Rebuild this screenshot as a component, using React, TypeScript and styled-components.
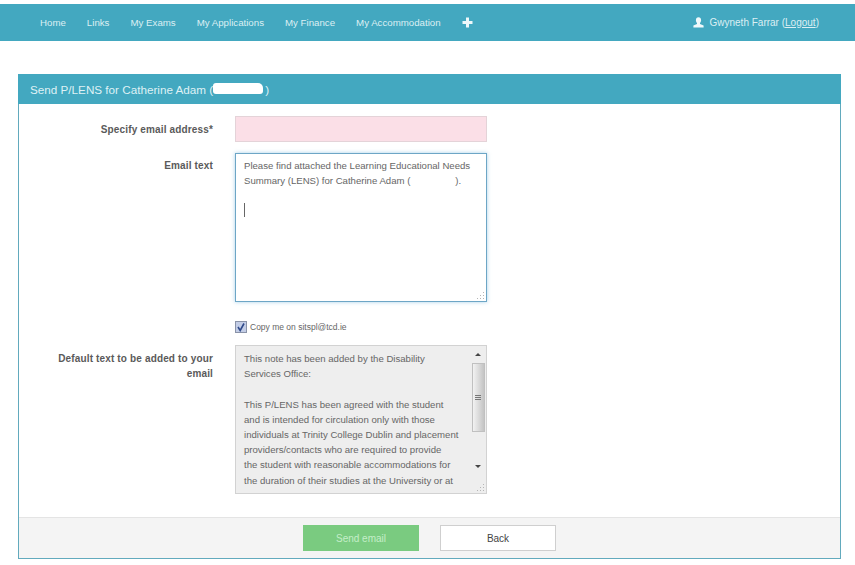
import React from "react";
import styled, { createGlobalStyle } from "styled-components";

const GlobalStyle = createGlobalStyle`
  html, body {
    margin: 0;
    padding: 0;
    background: #fff;
    font-family: "Liberation Sans", Arial, sans-serif;
  }
  * { box-sizing: border-box; }
`;

const Page = styled.div`
  width: 855px;
  height: 565px;
  overflow: hidden;
  padding-top: 4px;
  background: #fff;
`;

const NavBar = styled.nav`
  height: 37px;
  display: flex;
  align-items: center;
  justify-content: space-between;
  padding: 0 36px 0 40px;
  background: #43a8c0;
  color: #dceff3;
  font-size: 10px;
`;

const NavLinks = styled.div`
  display: flex;
  align-items: center;
  gap: 21px;
  font-size: 9.7px;
`;

const NavLink = styled.a`
  color: #dceff3;
  white-space: nowrap;
`;

const UserBox = styled.div`
  display: flex;
  align-items: center;
  gap: 5px;
  white-space: nowrap;
`;

const Logout = styled.a`
  color: #dceff3;
  text-decoration: underline;
`;

const Panel = styled.section`
  width: 823px;
  margin: 33px 0 0 18px;
  border: 1px solid #62aabd;
  border-top: 0;
`;

const PanelHeader = styled.h1`
  height: 30px;
  margin: 0 -1px;
  padding: 0 12px;
  display: flex;
  align-items: center;
  background: #43a8c0;
  color: #dff1f5;
  font-size: 11.7px;
  font-weight: 400;
  white-space: pre;
`;

const Redacted = styled.span`
  display: inline-block;
  width: 50px;
  height: 11px;
  margin: -1px 2px 0 0;
  background: #fff;
  border-radius: 3px 5px 3px 3px;
`;

const Form = styled.div`
  padding: 12px 0 23px;
  display: grid;
  grid-template-columns: 194px 252px;
  column-gap: 22px;
  align-items: start;
`;

const Label = styled.label<{ $top: number }>`
  margin-top: ${(p) => p.$top}px;
  color: #5a5a5a;
  font-size: 10px;
  font-weight: 700;
  letter-spacing: 0.15px;
  line-height: 15px;
  text-align: right;
`;

const EmailInput = styled.div`
  height: 26px;
  margin-bottom: 11px;
  background: #fbdfe7;
  border: 1px solid #e4d3d8;
`;

const TextBox = styled.div`
  position: relative;
  height: 149px;
  padding: 4px 8px;
  background: #fff;
  border: 1px solid #6da6c6;
  box-shadow: 0 0 4px rgba(130, 190, 225, 0.7);
  color: #666;
  font-size: 9.6px;
  line-height: 15.2px;
`;

const TextLine = styled.div`
  white-space: pre;
  min-height: 15.2px;
`;

const Gap = styled.span`
  display: inline-block;
  width: 45px;
`;

const Caret = styled.span`
  display: block;
  width: 1px;
  height: 14px;
  margin-top: 15px;
  background: #666;
`;

const Grip = styled.svg`
  position: absolute;
  right: 1px;
  bottom: 1px;
  width: 9px;
  height: 9px;
`;

const CopyRow = styled.div`
  grid-column: 2;
  display: flex;
  align-items: center;
  gap: 3px;
  height: 13px;
  margin: 18px 0 12px;
  color: #666;
  font-size: 8.5px;
`;

const CheckBox = styled.span`
  width: 12px;
  height: 12px;
  display: flex;
  align-items: center;
  justify-content: center;
  background: #c3cde6;
  border: 1px solid #8a93a8;
`;

const NoteBox = styled.div`
  position: relative;
  height: 149px;
  display: flex;
  overflow: hidden;
  background: #eeeeee;
  border: 1px solid #d2d2d2;
  color: #666;
  font-size: 9.6px;
  line-height: 15.2px;
`;

const NoteText = styled.div`
  flex: 1;
  padding: 5px 0 0 8px;
  white-space: pre;
`;

const ScrollBar = styled.div`
  width: 15px;
  display: flex;
  flex-direction: column;
  align-items: center;
  padding: 7px 1px 0 0;
`;

const ScrollThumb = styled.div`
  width: 13px;
  height: 69px;
  margin: 7px 0 33px;
  display: flex;
  align-items: center;
  justify-content: center;
  background: linear-gradient(to right, #f2f2f2, #c4c4c4);
  border: 1px solid #c0c0c0;
`;

const Footer = styled.footer`
  height: 41px;
  display: flex;
  align-items: center;
  justify-content: center;
  gap: 21px;
  background: #f4f4f4;
  border-top: 1px solid #e4e4e4;
`;

const Button = styled.button<{ $primary?: boolean }>`
  width: 116px;
  height: 26px;
  padding: 0;
  font-family: inherit;
  font-size: 10px;
  color: ${(p) => (p.$primary ? "#c4eec8" : "#444")};
  background: ${(p) => (p.$primary ? "#7acb80" : "#fff")};
  border: 1px solid ${(p) => (p.$primary ? "#7acb80" : "#cfcfcf")};
`;

const ResizeGrip = () => (
  <Grip viewBox="0 0 9 9">
    <g fill="#b5b5b5">
      <rect x="7" y="1" width="1" height="1" />
      <rect x="7" y="4" width="1" height="1" />
      <rect x="4" y="4" width="1" height="1" />
      <rect x="7" y="7" width="1" height="1" />
      <rect x="4" y="7" width="1" height="1" />
      <rect x="1" y="7" width="1" height="1" />
    </g>
  </Grip>
);

const PlusIcon = () => (
  <svg width="11" height="11" viewBox="0 0 11 11">
    <path d="M4 0.5h3v3.5h3.500v3h-3.500v3.500h-3v-3.500h-3.500v-3h3.500z" fill="#eef8fa" />
  </svg>
);

const UserIcon = () => (
  <svg width="11" height="11" viewBox="0 0 11 11">
    <path
      d="M5.500 0.300c1.700 0 2.600 1.200 2.600 2.900 0 1.200-.5 2.200-1.100 2.800v1l3.600 1.500v2h-10.200v-2l3.600-1.500v-1c-.6-.6-1.100-1.600-1.100-2.800 0-1.700.9-2.900 2.600-2.900z"
      fill="#f0f9fb"
    />
  </svg>
);

const navItems = ["Home", "Links", "My Exams", "My Applications", "My Finance", "My Accommodation"];

const noteLines = [
  "This note has been added by the Disability",
  "Services Office:",
  "",
  "This P/LENS has been agreed with the student",
  "and is intended for circulation only with those",
  "individuals at Trinity College Dublin and placement",
  "providers/contacts who are required to provide",
  "the student with reasonable accommodations for",
  "the duration of their studies at the University or at",
];

export default function App() {
  return (
    <Page>
      <GlobalStyle />
      <NavBar>
        <NavLinks>
          {navItems.map((item) => (
            <NavLink key={item}>{item}</NavLink>
          ))}
          <PlusIcon />
        </NavLinks>
        <UserBox>
          <UserIcon />
          <span>
            Gwyneth Farrar (<Logout>Logout</Logout>)
          </span>
        </UserBox>
      </NavBar>

      <Panel>
        <PanelHeader>
          Send P/LENS for Catherine Adam (<Redacted />)
        </PanelHeader>
        <Form>
          <Label $top={6}>Specify email address*</Label>
          <EmailInput />

          <Label $top={5}>Email text</Label>
          <TextBox>
            <TextLine>Please find attached the Learning Educational Needs</TextLine>
            <TextLine>
              Summary (LENS) for Catherine Adam (<Gap />).
            </TextLine>
            <Caret />
            <ResizeGrip />
          </TextBox>

          <CopyRow>
            <CheckBox>
              <svg width="10" height="10" viewBox="0 0 10 10">
                <path d="M2 5l2.200 3.500 3.800-7" fill="none" stroke="#2f4a8a" strokeWidth="1.600" />
              </svg>
            </CheckBox>
            Copy me on sitspl@tcd.ie
          </CopyRow>

          <Label $top={6}>
            Default text to be added to your
            <br />
            email
          </Label>
          <NoteBox>
            <NoteText>
              {noteLines.map((line, i) => (
                <TextLine key={i}>{line}</TextLine>
              ))}
            </NoteText>
            <ScrollBar>
              <svg width="6" height="3" viewBox="0 0 6 3">
                <path d="M3 0l3 3h-6z" fill="#444" />
              </svg>
              <ScrollThumb>
                <svg width="6" height="6" viewBox="0 0 6 6">
                  <path d="M0 .5h6M0 2.500h6M0 4.500h6" stroke="#777" />
                </svg>
              </ScrollThumb>
              <svg width="6" height="3" viewBox="0 0 6 3">
                <path d="M0 0h6l-3 3z" fill="#444" />
              </svg>
            </ScrollBar>
            <ResizeGrip />
          </NoteBox>
        </Form>
        <Footer>
          <Button $primary>Send email</Button>
          <Button>Back</Button>
        </Footer>
      </Panel>
    </Page>
  );
}
